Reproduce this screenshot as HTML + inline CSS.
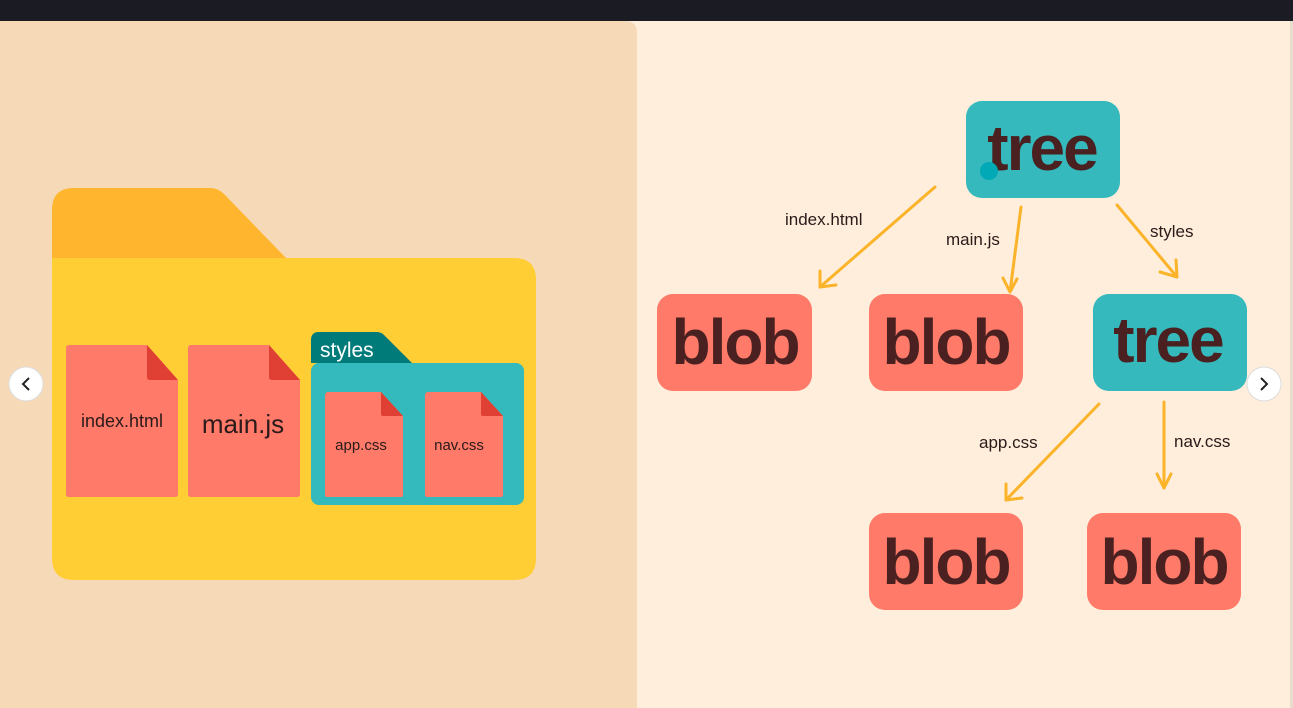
<!DOCTYPE html>
<html><head><meta charset="utf-8"><style>
html,body{margin:0;padding:0;width:1293px;height:708px;overflow:hidden;background:#feeedb;font-family:"Liberation Sans",sans-serif}
</style></head><body>
<svg width="1293" height="708" viewBox="0 0 1293 708" xmlns="http://www.w3.org/2000/svg" style="position:absolute;left:0;top:0">
<rect x="0" y="0" width="1293" height="708" fill="#feeedb"/>
<path d="M0 21 H625 Q637 21 637 33 V708 H0 Z" fill="#f6d9b7"/>
<rect x="0" y="0" width="1293" height="21" fill="#1b1b24"/>
<rect x="1290" y="21" width="3" height="687" fill="#e8dccd"/>
<!-- folder -->
<path d="M52 258 V210 Q52 188 74 188 H210 Q218 188 224 194 L286 258 Z" fill="#ffb52e"/>
<path d="M52 258 H514 Q536 258 536 280 V558 Q536 580 514 580 H74 Q52 580 52 558 Z" fill="#ffce34"/>
<!-- files -->
<path d="M69 345 H147 L178 380 V494 Q178 497 175 497 H69 Q66 497 66 494 V348 Q66 345 69 345Z" fill="#ff7a68"/>
<path d="M147 345 L178 380 H150 Q147 380 147 377Z" fill="#e03f33"/>
<path d="M191 345 H269 L300 380 V494 Q300 497 297 497 H191 Q188 497 188 494 V348 Q188 345 191 345Z" fill="#ff7a68"/>
<path d="M269 345 L300 380 H272 Q269 380 269 377Z" fill="#e03f33"/>
<path d="M311 363 V340 Q311 332 319 332 H377 Q381 332 384 335 L412 363 Z" fill="#007b7a"/>
<rect x="311" y="363" width="213" height="142" rx="8" fill="#34b9bc"/>
<path d="M327 392 H381 L403 416 V495 Q403 497 401 497 H327 Q325 497 325 495 V394Z" fill="#ff7a68"/>
<path d="M381 392 L403 416 H383 Q381 416 381 414Z" fill="#e03f33"/>
<path d="M427 392 H481 L503 416 V495 Q503 497 501 497 H427 Q425 497 425 495 V394Z" fill="#ff7a68"/>
<path d="M481 392 L503 416 H483 Q481 416 481 414Z" fill="#e03f33"/>
<g font-family="Liberation Sans, sans-serif" fill="#2a1a1a">
<text x="122" y="427" font-size="18" text-anchor="middle">index.html</text>
<text x="243" y="433" font-size="26" text-anchor="middle">main.js</text>
<text x="361" y="450" font-size="15" text-anchor="middle">app.css</text>
<text x="459" y="450" font-size="15" text-anchor="middle">nav.css</text>
<text x="320" y="357" font-size="21" fill="#ffffff">styles</text>
</g>
<!-- nav buttons -->
<circle cx="26" cy="384" r="17" fill="#fff" stroke="#ddd"/>
<path d="M29 378 L23 384 L29 390" stroke="#222" stroke-width="2" fill="none"/>
<circle cx="1264" cy="384" r="17" fill="#fff" stroke="#ddd"/>
<path d="M1261 378 L1267 384 L1261 390" stroke="#222" stroke-width="2" fill="none"/>
<!-- diagram boxes -->
<rect x="966" y="101" width="154" height="97" rx="16" fill="#35b9bd"/>
<rect x="657" y="294" width="155" height="97" rx="16" fill="#ff7a68"/>
<rect x="869" y="294" width="154" height="97" rx="16" fill="#ff7a68"/>
<rect x="1093" y="294" width="154" height="97" rx="16" fill="#35b9bd"/>
<rect x="869" y="513" width="154" height="97" rx="16" fill="#ff7a68"/>
<rect x="1087" y="513" width="154" height="97" rx="16" fill="#ff7a68"/>
<g font-family="Liberation Sans, sans-serif" font-weight="bold" fill="#4a2020" text-anchor="middle" font-size="64" letter-spacing="-2">
<text x="1042" y="170">tree</text>
<text x="735" y="364">blob</text>
<text x="946" y="364">blob</text>
<text x="1168" y="362">tree</text>
<text x="946" y="584">blob</text>
<text x="1164" y="584">blob</text>
</g>
<circle cx="989" cy="171" r="9" fill="#00a9b5"/>
<!-- arrows -->
<g stroke="#fbb42a" stroke-width="3" fill="none" stroke-linecap="round" stroke-linejoin="round">
<path d="M935 187 L820 287 M820 271 L820 287 L836 285"/>
<path d="M1021 207 L1010 292 M1003 278 L1010 292 L1017 279"/>
<path d="M1117 205 L1177 277 M1160 272 L1177 277 L1176 260"/>
<path d="M1099 404 L1006 500 M1006 484 L1006 500 L1022 498"/>
<path d="M1164 402 L1164 488 M1157 474 L1164 488 L1171 474"/>
</g>
<g font-family="Liberation Sans, sans-serif" fill="#2a1a1a" font-size="17">
<text x="785" y="225">index.html</text>
<text x="946" y="245">main.js</text>
<text x="1150" y="237">styles</text>
<text x="979" y="448">app.css</text>
<text x="1174" y="447">nav.css</text>
</g>
</svg>
</body></html>
